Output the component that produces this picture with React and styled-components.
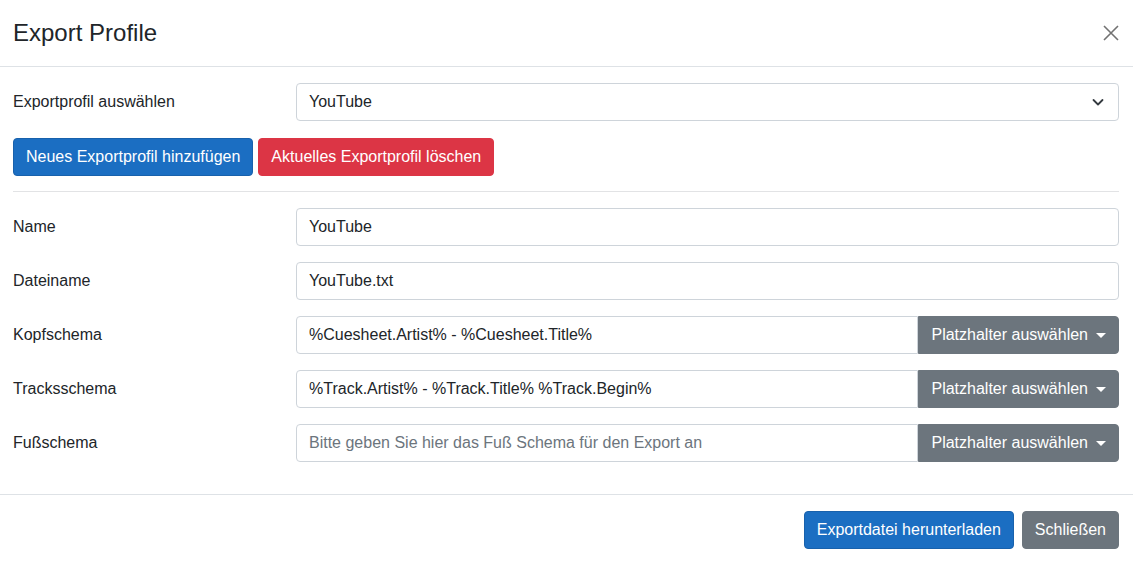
import styled, { createGlobalStyle } from "styled-components";

const Global = createGlobalStyle`
  html, body {
    margin: 0;
    background: #fff;
    font-family: "Liberation Sans", Arial, sans-serif;
    font-size: 16px;
    color: #212529;
  }
  * { box-sizing: border-box; }
`;

const Modal = styled.div`
  width: 1133px;
  background: #fff;
  display: flex;
  flex-direction: column;
`;
const Header = styled.div`
  flex-shrink: 0;
  height: 67px;
  border-bottom: 1px solid #dee2e6;
  display: flex;
  align-items: center;
  justify-content: space-between;
  padding: 0 14px 1px 13px;
`;
const Title = styled.h5`
  margin: 0;
  font-size: 24px;
  font-weight: 400;
  line-height: 1.3;
`;
const Close = styled.button`
  width: 16px;
  height: 16px;
  padding: 0;
  border: 0;
  background: none;
  cursor: pointer;
  display: flex;
  opacity: 0.55;
`;
const Body = styled.div`
  padding: 16px 14px 16px 13px;
`;
const Row = styled.div`
  display: grid;
  grid-template-columns: 259px 1fr;
  column-gap: 24px;
  align-items: center;
  margin-bottom: ${(p) => (p.$flush ? "0" : "16px")};
`;
const Label = styled.label`
  line-height: 1.5;
`;
const Control = styled.input`
  width: 100%;
  height: 38px;
  padding: 6px 12px;
  font: inherit;
  color: #212529;
  border: 1px solid #ced4da;
  border-radius: ${(p) => (p.$grouped ? "4px 0 0 4px" : "4px")};
  outline: none;
  &::placeholder { color: #6c757d; }
`;
const SelectBox = styled.div`
  height: 38px;
  padding: 6px 12px;
  border: 1px solid #ced4da;
  border-radius: 4px;
  display: flex;
  align-items: center;
  justify-content: space-between;
  line-height: 1.5;
`;
const Group = styled.div`
  display: flex;
`;
const Btn = styled.button`
  height: 38px;
  padding: 6px 12px;
  font: inherit;
  line-height: 1.5;
  color: #fff;
  border: 1px solid ${(p) => p.$border};
  background: ${(p) => p.$bg};
  border-radius: ${(p) => (p.$grouped ? "0 4px 4px 0" : "4px")};
  white-space: nowrap;
  display: inline-flex;
  align-items: center;
  cursor: pointer;
`;
const Caret = styled.span`
  display: inline-block;
  margin-left: 8px;
  border-top: 5px solid #fff;
  border-left: 5px solid transparent;
  border-right: 5px solid transparent;
`;
const Actions = styled.div`
  display: flex;
  gap: 5px;
  margin-top: 17px;
`;
const Rule = styled.hr`
  margin: 15px 0 16px;
  border: 0;
  border-top: 1px solid #e2e3e5;
`;
const Footer = styled.div`
  border-top: 1px solid #dee2e6;
  display: flex;
  justify-content: flex-end;
  gap: 8px;
  padding: 16px 14px 15px 13px;
`;

const blue = ["#1b6ec2", "#1861ac"];
const red = ["#dc3545", "#dc3545"];
const gray = ["#6c757d", "#6c757d"];

const PickerRow = ({ label, value, placeholder }) => (
  <Row>
    <Label>{label}</Label>
    <Group>
      <Control $grouped defaultValue={value} placeholder={placeholder} />
      <Btn $grouped $bg={gray[0]} $border={gray[1]}>
        Platzhalter auswählen
        <Caret />
      </Btn>
    </Group>
  </Row>
);

export default function App() {
  return (
    <>
      <Global />
      <Modal>
        <Header>
          <Title>Export Profile</Title>
          <Close aria-label="Close">
            <svg width="16" height="16" viewBox="0 0 16 16">
              <path d="M1 1L15 15M15 1L1 15" stroke="#000" strokeWidth="1.6" />
            </svg>
          </Close>
        </Header>
        <Body>
          <Row $flush>
            <Label>Exportprofil auswählen</Label>
            <SelectBox>
              <span>YouTube</span>
              <svg width="16" height="12" viewBox="0 0 16 12">
                <path d="M3.5 4l4.5 4.5 4.5-4.5" fill="none" stroke="#343a40" strokeWidth="1.8" strokeLinecap="round" strokeLinejoin="round" />
              </svg>
            </SelectBox>
          </Row>
          <Actions>
            <Btn $bg={blue[0]} $border={blue[1]}>Neues Exportprofil hinzufügen</Btn>
            <Btn $bg={red[0]} $border={red[1]}>Aktuelles Exportprofil löschen</Btn>
          </Actions>
          <Rule />
          <Row>
            <Label>Name</Label>
            <Control defaultValue="YouTube" />
          </Row>
          <Row>
            <Label>Dateiname</Label>
            <Control defaultValue="YouTube.txt" />
          </Row>
          <PickerRow label="Kopfschema" value="%Cuesheet.Artist% - %Cuesheet.Title%" />
          <PickerRow label="Tracksschema" value="%Track.Artist% - %Track.Title% %Track.Begin%" />
          <PickerRow
            label="Fußschema"
            placeholder="Bitte geben Sie hier das Fuß Schema für den Export an"
          />
        </Body>
        <Footer>
          <Btn $bg={blue[0]} $border={blue[1]}>Exportdatei herunterladen</Btn>
          <Btn $bg={gray[0]} $border={gray[1]}>Schließen</Btn>
        </Footer>
      </Modal>
    </>
  );
}
